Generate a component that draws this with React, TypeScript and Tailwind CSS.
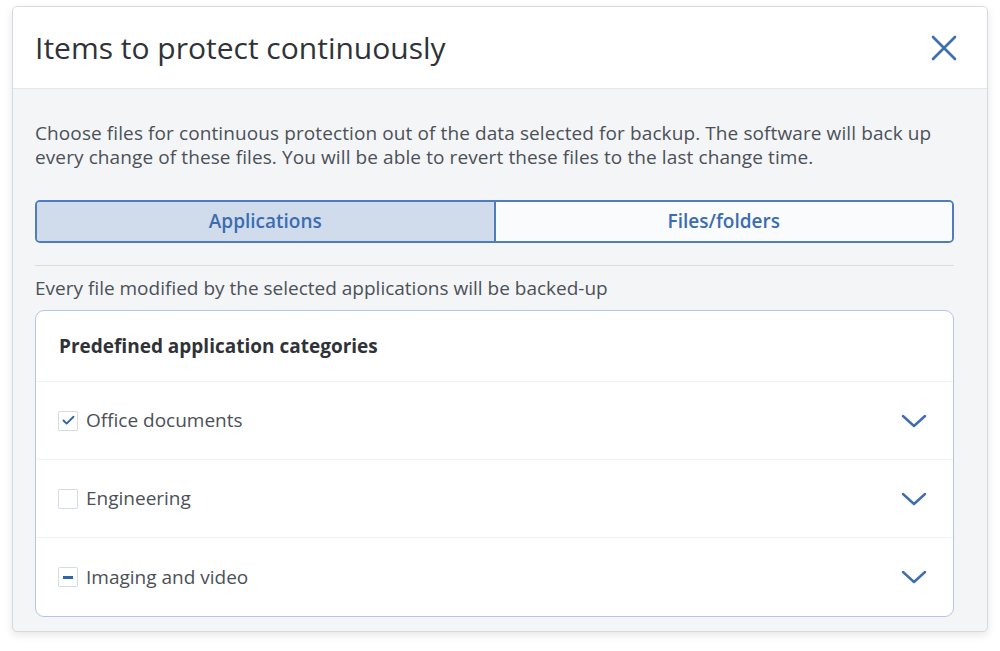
import { Check } from 'lucide-react';

type Row = { label: string; state: 'checked' | 'empty' | 'partial' };

const rows: Row[] = [
	{ label: 'Office documents', state: 'checked' },
	{ label: 'Engineering', state: 'empty' },
	{ label: 'Imaging and video', state: 'partial' },
];

function Chevron() {
	return (
		<svg width="26" height="16" viewBox="0 0 26 16" fill="none">
			<path d="M2 3 L13 13 L24 3" stroke="#3d6db3" strokeWidth="2.4" strokeLinecap="round" strokeLinejoin="round" />
		</svg>
	);
}

function Box({ state }: { state: Row['state'] }) {
	return (
		<span className="flex h-[20px] w-[20px] items-center justify-center rounded-[2px] border border-[#d5dbe3] bg-white">
			{state === 'checked' && <Check size={15} strokeWidth={3} color="#2f63ad" />}
			{state === 'partial' && <span className="h-[3px] w-[10px] bg-[#2f63ad]" />}
		</span>
	);
}

export default function App() {
	return (
		<div className="h-[651px] w-[1000px] bg-white pl-[12px] pt-[6px]" style={{ fontFamily: '"Open Sans", sans-serif' }}>
			<div className="w-[976px] overflow-hidden rounded-[5px] border border-[#d3dae3] bg-[#f4f5f7] shadow-[0_3px_8px_rgba(0,0,0,0.10)]">
				{/* Header */}
				<div className="flex h-[82px] items-center justify-between border-b border-[#e4e8ee] bg-white pl-[22px] pr-[30px]">
					<h1 className="text-[30px] leading-none text-[#2f3337]">Items to protect continuously</h1>
					<svg width="26" height="26" viewBox="0 0 26 26" fill="none">
						<path d="M2 2 L24 24 M24 2 L2 24" stroke="#3d6db3" strokeWidth="2.6" strokeLinecap="round" />
					</svg>
				</div>

				{/* Body */}
				<div className="pb-[14px] pl-[22px] pr-[33px] pt-[32px]">
					<p className="text-[19px] leading-[24px] tracking-[0.1px] text-[#4b5157]">
						Choose files for continuous protection out of the data selected for backup. The software will back up every change of these files. You will be able to revert these files to the last change time.
					</p>

					<div className="mt-[31px] flex h-[43px] overflow-hidden rounded-[5px] border-2 border-[#4f7cbf]">
						<div className="flex flex-1 items-center justify-center border-r-2 border-[#4f7cbf] bg-[#d0dcec] text-[19px] font-semibold text-[#3c6cb1]">
							Applications
						</div>
						<div className="flex flex-1 items-center justify-center bg-[#fafbfc] text-[19px] font-semibold text-[#3c6cb1]">
							Files/folders
						</div>
					</div>

					<div className="mt-[22px] h-px bg-[#d6dde6]" />

					<p className="mt-[10px] text-[19px] leading-[24px] text-[#4b5157]">
						Every file modified by the selected applications will be backed-up
					</p>

					<div className="mt-[10px] rounded-[9px] border border-[#b3c6e3] bg-white">
						<div className="flex h-[71px] items-center border-b border-[#eef1f5] px-[23px] text-[19px] font-bold text-[#2f3337]">
							Predefined application categories
						</div>
						{rows.map((row, i) => (
							<div
								key={row.label}
								className={`flex h-[78px] items-center justify-between pl-[22px] pr-[26px] ${i < rows.length - 1 ? 'border-b border-[#eef1f5]' : ''}`}>
								<div className="flex items-center gap-[8px]">
									<Box state={row.state} />
									<span className="text-[19px] text-[#4b5157]">{row.label}</span>
								</div>
								<Chevron />
							</div>
						))}
					</div>
				</div>
			</div>
		</div>
	);
}
